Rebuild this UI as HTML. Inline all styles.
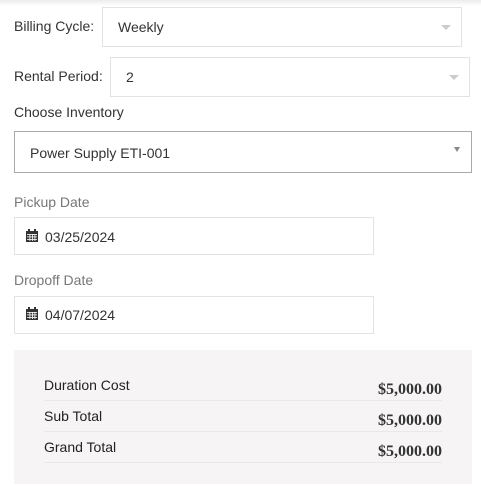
<!DOCTYPE html>
<html><head><style>
body{margin:0;width:481px;height:486px;background:#fff;font-family:"Liberation Sans",sans-serif;position:relative;overflow:hidden;color:#333}
.a{position:absolute}
.box{position:absolute;border:1px solid #e3e3e3;box-sizing:border-box;background:#fff}
.lbl{font-size:14px;color:#333}
.arr{position:absolute;width:0;height:0;border-left:5px solid transparent;border-right:5px solid transparent;border-top:5px solid #ccc}
.amt{position:absolute;right:39px;font-family:"Liberation Serif",serif;font-weight:bold;font-size:16px;color:#333}
.rl{position:absolute;left:44px;font-size:14px;color:#222}
.ln{position:absolute;left:44px;width:398px;height:1px;background:#ebe8e8}
</style></head><body>
<div class="a" style="left:0;top:0;width:481px;height:6px;background:linear-gradient(#ececec,#fff)"></div>
<div class="a lbl" style="left:14px;top:18px">Billing Cycle:</div>
<div class="box" style="left:102px;top:7px;width:360px;height:40px"></div>
<div class="a lbl" style="left:118px;top:19px">Weekly</div>
<div class="arr" style="left:441px;top:25px"></div>
<div class="a lbl" style="left:14px;top:68px">Rental Period:</div>
<div class="box" style="left:110px;top:57px;width:360px;height:40px"></div>
<div class="a lbl" style="left:126px;top:69px">2</div>
<div class="arr" style="left:449px;top:75px"></div>
<div class="a lbl" style="left:14px;top:104px">Choose Inventory</div>
<div class="box" style="left:14px;top:131px;width:458px;height:42px;border-color:#aaa"></div>
<div class="a lbl" style="left:30px;top:145px">Power Supply ETI-001</div>
<div class="arr" style="left:454px;top:147px;border-top-color:#888;border-width:5px 3.5px 0"></div>
<div class="a" style="left:14px;top:194px;font-size:14px;color:#777">Pickup Date</div>
<div class="box" style="left:14px;top:217px;width:360px;height:38px"></div>
<svg class="a" style="left:26px;top:229px" width="12" height="13" viewBox="0 0 12 13"><rect x="0" y="2" width="12" height="11" fill="#333"/><rect x="2" y="0" width="2" height="3" fill="#333"/><rect x="8" y="0" width="2" height="3" fill="#333"/><g fill="#fff"><rect x="1" y="5" width="10" height=".8"/><rect x="1" y="7.5" width="10" height=".8"/><rect x="1" y="10" width="10" height=".8"/><rect x="3.5" y="5" width=".8" height="7"/><rect x="6" y="5" width=".8" height="7"/><rect x="8.5" y="5" width=".8" height="7"/></g></svg>
<div class="a lbl" style="left:45px;top:229px">03/25/2024</div>
<div class="a" style="left:14px;top:272px;font-size:14px;color:#777">Dropoff Date</div>
<div class="box" style="left:14px;top:296px;width:360px;height:38px"></div>
<svg class="a" style="left:26px;top:307px" width="12" height="13" viewBox="0 0 12 13"><rect x="0" y="2" width="12" height="11" fill="#333"/><rect x="2" y="0" width="2" height="3" fill="#333"/><rect x="8" y="0" width="2" height="3" fill="#333"/><g fill="#fff"><rect x="1" y="5" width="10" height=".8"/><rect x="1" y="7.5" width="10" height=".8"/><rect x="1" y="10" width="10" height=".8"/><rect x="3.5" y="5" width=".8" height="7"/><rect x="6" y="5" width=".8" height="7"/><rect x="8.5" y="5" width=".8" height="7"/></g></svg>
<div class="a lbl" style="left:45px;top:307px">04/07/2024</div>
<div class="a" style="left:14px;top:350px;width:458px;height:134px;background:#f6f4f4"></div>
<div class="rl" style="top:377px">Duration Cost</div>
<div class="amt" style="top:381px">$5,000.00</div>
<div class="ln" style="top:400px"></div>
<div class="rl" style="top:408px">Sub Total</div>
<div class="amt" style="top:412px">$5,000.00</div>
<div class="ln" style="top:431px"></div>
<div class="rl" style="top:439px">Grand Total</div>
<div class="amt" style="top:443px">$5,000.00</div>
<div class="ln" style="top:462px"></div>
</body></html>
